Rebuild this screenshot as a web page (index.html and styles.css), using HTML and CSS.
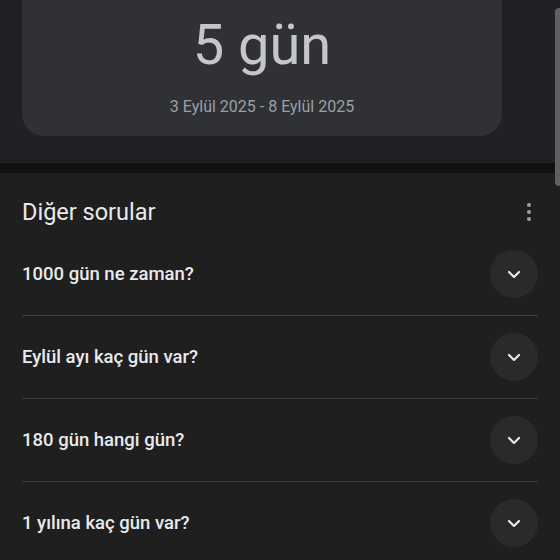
FILE: index.html
```html
<!DOCTYPE html>
<html lang="tr">
<head>
    <meta charset="UTF-8">
    <meta name="viewport" content="width=device-width, initial-scale=1.0">
    <title>Diğer sorular</title>
    <link rel="stylesheet" href="styles.css">
</head>
<body>
    <div class="top">
        <div class="result-card">
            <div class="result-value">5 gün</div>
            <div class="result-range">3 Eylül 2025 - 8 Eylül 2025</div>
        </div>
    </div>
    <div class="band"></div>
    <div class="questions">
        <div class="questions-head">
            <h2>Diğer sorular</h2>
            <button class="kebab" aria-label="Diğer seçenekler">
                <span></span><span></span><span></span>
            </button>
        </div>
        <ul class="question-list">
            <li class="question">
                <span>1000 gün ne zaman?</span>
                <button class="expand" aria-label="Genişlet">
                    <svg width="20" height="20" viewBox="0 0 24 24"><path d="M6 9.5l6 6 6-6" fill="none" stroke="#e8eaed" stroke-width="2.6" stroke-linecap="round" stroke-linejoin="round"/></svg>
                </button>
            </li>
            <li class="question">
                <span>Eylül ayı kaç gün var?</span>
                <button class="expand" aria-label="Genişlet">
                    <svg width="20" height="20" viewBox="0 0 24 24"><path d="M6 9.5l6 6 6-6" fill="none" stroke="#e8eaed" stroke-width="2.6" stroke-linecap="round" stroke-linejoin="round"/></svg>
                </button>
            </li>
            <li class="question">
                <span>180 gün hangi gün?</span>
                <button class="expand" aria-label="Genişlet">
                    <svg width="20" height="20" viewBox="0 0 24 24"><path d="M6 9.5l6 6 6-6" fill="none" stroke="#e8eaed" stroke-width="2.6" stroke-linecap="round" stroke-linejoin="round"/></svg>
                </button>
            </li>
            <li class="question">
                <span>1 yılına kaç gün var?</span>
                <button class="expand" aria-label="Genişlet">
                    <svg width="20" height="20" viewBox="0 0 24 24"><path d="M6 9.5l6 6 6-6" fill="none" stroke="#e8eaed" stroke-width="2.6" stroke-linecap="round" stroke-linejoin="round"/></svg>
                </button>
            </li>
        </ul>
    </div>
    <div class="scrollbar"></div>
</body>
</html>
```
FILE: styles.css
```css
body {
    margin: 0;
    padding: 0;
    background: #1f1f1f;
    color: #e8eaed;
    font-family: Roboto, "Liberation Sans", sans-serif;
    overflow: hidden;
}

.top {
    background: #202124;
    padding: 0 58px 27px 22px;
}

.result-card {
    background: #303134;
    border-radius: 0 0 22px 22px;
    height: 136px;
    text-align: center;
}

.result-value {
    padding-top: 13px;
    font-size: 56px;
    line-height: 64px;
    color: #c4c7c5;
}

.result-range {
    margin-top: 20px;
    font-size: 16px;
    color: #9aa0a6;
}

.band {
    height: 10px;
    background: #111111;
}

.questions {
    padding: 0 22px;
}

.questions-head {
    display: flex;
    align-items: center;
    justify-content: space-between;
    padding: 26px 0 8px;
    height: 26px;
}

.questions-head h2 {
    margin: 0;
    font-size: 23.5px;
    line-height: 26px;
    font-weight: 400;
    color: #e8eaed;
}

.kebab {
    display: flex;
    flex-direction: column;
    gap: 3px;
    background: none;
    border: none;
    padding: 0 7px 0 0;
}

.kebab span {
    width: 4px;
    height: 4px;
    border-radius: 50%;
    background: #9aa0a6;
}

.question-list {
    list-style: none;
    margin: 0;
    padding: 0;
}

.question {
    display: flex;
    align-items: center;
    justify-content: space-between;
    height: 82px;
    border-bottom: 1px solid #3c4043;
    font-size: 18.5px;
    font-weight: 500;
}

.expand {
    width: 48px;
    height: 48px;
    border-radius: 50%;
    border: none;
    background: #2a2a2a;
    display: flex;
    align-items: center;
    justify-content: center;
    padding: 0;
}

.scrollbar {
    position: absolute;
    top: 8px;
    right: 0;
    width: 5px;
    height: 178px;
    border-radius: 4px 0 0 4px;
    background: #5f6060;
}
```
